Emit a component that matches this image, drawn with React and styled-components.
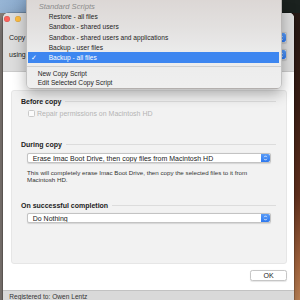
import React from 'react';
import styled, { createGlobalStyle } from 'styled-components';

const Global = createGlobalStyle`
  html, body { margin: 0; padding: 0; }
  body { font-family: "Liberation Sans", Arial, sans-serif; color: #222; }
  * { box-sizing: border-box; }
`;

const Desktop = styled.div`
  position: relative;
  width: 300px;
  height: 300px;
  overflow: hidden;
  padding: 13px 6px 0 3px;
  background:
    linear-gradient(to right, #97b5d5 0, #86a6c9 30px, #3a4048 262px, #1b221f 283px) left top / 100% 13px no-repeat,
    linear-gradient(to bottom, #241915 0, #3f2117 35%, #6a3420 65%, #b06c42 88%, #c88a5a 100%) right top / 8px 100% no-repeat,
    #877f7b;
`;

const Window = styled.div`
  height: 300px;
  display: flex;
  flex-direction: column;
  background: #fff;
  border-radius: 5px 5px 0 0;
  overflow: hidden;
  box-shadow: 0 0 0 0.5px rgba(0,0,0,0.35), 0 6px 16px rgba(0,0,0,0.4);
`;

const Toolbar = styled.div`
  height: 59px;
  flex: none;
  background: #dcdcdc;
  border-bottom: 1px solid #cbcbcb;
`;

const TitleBar = styled.div`
  height: 9px;
  display: flex;
  gap: 5px;
  padding: 2.7px 0 0 1.3px;
`;

const Light = styled.span`
  width: 6px;
  height: 6px;
  border-radius: 50%;
  background: ${p => p.$c};
  box-shadow: inset 0 0 0 0.5px rgba(0,0,0,0.15);
`;

const FormRows = styled.div`
  display: flex;
  flex-direction: column;
  gap: 6px;
  margin-top: 10px;
  padding: 0 7px 0 6px;
`;

const FormRow = styled.div`
  display: grid;
  grid-template-columns: 30px 1fr;
  align-items: center;
  height: 11px;
  font-size: 7px;
`;

const Popup = styled.div`
  position: relative;
  height: ${p => p.$h || 10}px;
  display: flex;
  align-items: center;
  padding-left: 4.7px;
  font-size: 7px;
  background: #fff;
  border: 0.5px solid #c3c3c3;
  border-radius: 2px;
  box-shadow: 0 0.5px 1px rgba(0,0,0,0.12);
  overflow: hidden;
`;

const Stepper = styled.span`
  position: absolute;
  right: 0;
  top: 0;
  bottom: 0;
  width: 9px;
  display: flex;
  align-items: center;
  justify-content: center;
  background: linear-gradient(#5a9cf7, #2d78ee);
  border-radius: 0 2px 2px 0;
`;

const Content = styled.div`
  flex: none;
  padding: 18px 7px 0 8px;
`;

const Panel = styled.div`
  height: 174px;
  padding: 6px 10px 0 9px;
  background: #f2f2f2;
  border: 0.5px solid #e6e6e6;
  border-radius: 3px;
`;

const Header = styled.div`
  display: flex;
  align-items: center;
  gap: 4px;
  height: 9px;
  margin-top: ${p => p.$mt || 0}px;
  font-size: 7px;
  font-weight: bold;
  color: #222;
  &::after {
    content: '';
    flex: 1;
    height: 1px;
    background: #dcdcdc;
  }
`;

const Indent = styled.div`
  margin-top: ${p => p.$mt || 0}px;
  padding: 0 5px 0 ${p => p.$pl || 6}px;
`;

const CheckRow = styled.label`
  display: flex;
  align-items: center;
  gap: 2.5px;
  height: 9px;
  font-size: 7px;
  color: #b4b4b4;
`;

const Box = styled.span`
  width: 6.5px;
  height: 6.5px;
  border: 0.5px solid #c9c9c9;
  border-radius: 1.5px;
  background: #fbfbfb;
`;

const Note = styled.p`
  margin: 0;
  width: 246px;
  font-size: 6.2px;
  line-height: 7.6px;
  color: #333;
`;

const Footer = styled.div`
  display: flex;
  justify-content: flex-end;
  padding-top: 6px;
`;

const Button = styled.button`
  width: 37px;
  height: 11px;
  padding: 0;
  font: 7px "Liberation Sans", Arial, sans-serif;
  color: #222;
  background: #fff;
  border: 0.5px solid #c6c6c6;
  border-radius: 2.5px;
  box-shadow: 0 0.5px 1px rgba(0,0,0,0.1);
`;

const StatusBar = styled.div`
  margin-top: 9px;
  height: 18px;
  padding: 2px 0 0 6.3px;
  font-size: 6.6px;
  color: #333;
  background: #d9d9d9;
  border-top: 1px solid #c2c2c2;
`;

const Menu = styled.div`
  position: absolute;
  left: 26px;
  top: -4px;
  width: 256px;
  padding: 4px 0 1px;
  background: linear-gradient(to bottom, #dbd6d4 0%, #e3e1e0 35%, #ebebeb 60%, #efefef 100%);
  border: 0.5px solid rgba(0,0,0,0.18);
  border-radius: 0 0 5px 5px;
  box-shadow: 0 5px 14px rgba(0,0,0,0.3);
`;

const Item = styled.div`
  position: relative;
  height: ${p => p.$h || 10.3}px;
  display: flex;
  align-items: center;
  padding-left: ${p => p.$pl || 21}px;
  margin: 0 2px 0 0.7px;
  font-size: ${p => (p.$head ? 7.6 : 6.6)}px;
  font-style: ${p => (p.$head ? 'italic' : 'normal')};
  color: ${p => (p.$active ? '#fff' : p.$head ? '#8c8c8c' : '#1e1e1e')};
  background: ${p => (p.$active ? '#3d86f0' : 'transparent')};
`;

const Check = styled.span`
  position: absolute;
  left: 3.3px;
  font-size: 6.5px;
`;

const Separator = styled.div`
  height: 6.5px;
  display: flex;
  align-items: center;
  &::before {
    content: '';
    flex: 1;
    height: 1px;
    background: #cfcfcf;
  }
`;

function Arrows() {
  return (
    <svg width="5" height="8" viewBox="0 0 5 8">
      <path d="M1.2 3.2 L2.5 1.8 L3.8 3.2 M1.2 4.8 L2.5 6.2 L3.8 4.8" fill="none" stroke="#fff" strokeWidth="0.8" />
    </svg>
  );
}

function Select({ children, h }) {
  return (
    <Popup $h={h}>
      {children}
      <Stepper><Arrows /></Stepper>
    </Popup>
  );
}

export default function App() {
  return (
    <>
      <Global />
      <Desktop>
        <Window>
          <Toolbar>
            <TitleBar>
              <Light $c="#fc605b" />
              <Light $c="#fdbc40" />
              <Light $c="#34c84a" />
            </TitleBar>
            <FormRows>
              <FormRow>
                <span>Copy</span>
                <Select h={11} />
              </FormRow>
              <FormRow>
                <span>using</span>
                <Select h={11} />
              </FormRow>
            </FormRows>
          </Toolbar>
          <Content>
            <Panel>
              <Header>Before copy</Header>
              <Indent $mt={3} $pl={7}>
                <CheckRow><Box />Repair permissions on Macintosh HD</CheckRow>
              </Indent>
              <Header $mt={21.8}>During copy</Header>
              <Indent $mt={4.7}>
                <Select>Erase Imac Boot Drive, then copy files from Macintosh HD</Select>
              </Indent>
              <Indent $mt={5.4}>
                <Note>This will completely erase Imac Boot Drive, then copy the selected files to it from Macintosh HD.</Note>
              </Indent>
              <Header $mt={17.4}>On successful completion</Header>
              <Indent $mt={3}>
                <Select>Do Nothing</Select>
              </Indent>
            </Panel>
            <Footer>
              <Button>OK</Button>
            </Footer>
          </Content>
          <StatusBar>Registered to: Owen Lentz</StatusBar>
        </Window>
        <Menu>
          <Item $head $pl={11}>Standard Scripts</Item>
          <Item>Restore - all files</Item>
          <Item>Sandbox - shared users</Item>
          <Item>Sandbox - shared users and applications</Item>
          <Item>Backup - user files</Item>
          <Item $active><Check>✓</Check>Backup - all files</Item>
          <Separator />
          <Item $pl={10} $h={9}>New Copy Script</Item>
          <Item $pl={10} $h={9}>Edit Selected Copy Script</Item>
        </Menu>
      </Desktop>
    </>
  );
}
